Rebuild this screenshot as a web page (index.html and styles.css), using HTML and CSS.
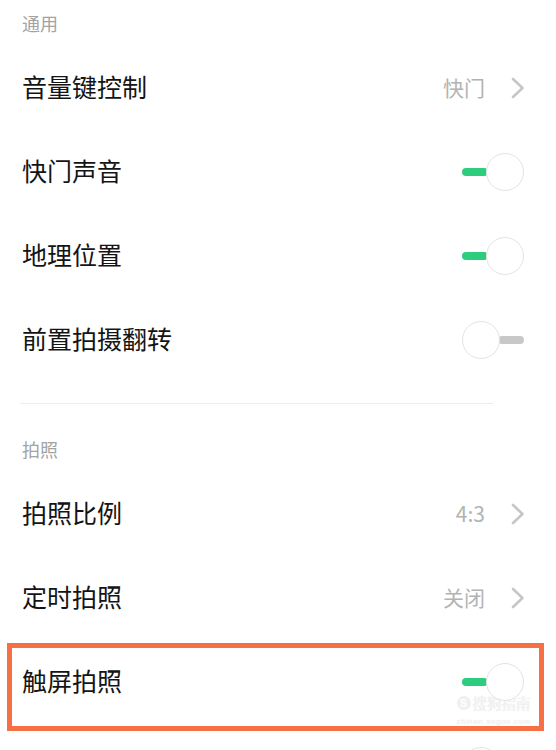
FILE: index.html
```html
<!DOCTYPE html>
<html lang="zh-CN">
<head>
<meta charset="utf-8">
<title>相机设置</title>
<link rel="stylesheet" href="styles.css">
</head>
<body>
<div class="page">
  <div class="section-title">通用</div>
  <div class="row">
    <span class="label">音量键控制</span>
    <span class="right"><span class="value">快门</span><svg class="chev" width="14" height="22" viewBox="0 0 14 22"><polyline points="2,2 11.5,11 2,20" fill="none" stroke="#c6c6c6" stroke-width="2.6" stroke-linecap="round" stroke-linejoin="round"/></svg></span>
  </div>
  <div class="row">
    <span class="label">快门声音</span>
    <span class="toggle on"><span class="bar"></span><span class="knob"></span></span>
  </div>
  <div class="row">
    <span class="label">地理位置</span>
    <span class="toggle on"><span class="bar"></span><span class="knob"></span></span>
  </div>
  <div class="row">
    <span class="label">前置拍摄翻转</span>
    <span class="toggle off"><span class="knob"></span><span class="bar"></span></span>
  </div>
  <div class="divider"></div>
  <div class="section-title">拍照</div>
  <div class="row">
    <span class="label">拍照比例</span>
    <span class="right"><span class="value">4:3</span><svg class="chev" width="14" height="22" viewBox="0 0 14 22"><polyline points="2,2 11.5,11 2,20" fill="none" stroke="#c6c6c6" stroke-width="2.6" stroke-linecap="round" stroke-linejoin="round"/></svg></span>
  </div>
  <div class="row">
    <span class="label">定时拍照</span>
    <span class="right"><span class="value">关闭</span><svg class="chev" width="14" height="22" viewBox="0 0 14 22"><polyline points="2,2 11.5,11 2,20" fill="none" stroke="#c6c6c6" stroke-width="2.6" stroke-linecap="round" stroke-linejoin="round"/></svg></span>
  </div>
  <div class="row">
    <span class="label">触屏拍照</span>
    <span class="toggle on"><span class="bar"></span><span class="knob"></span></span>
  </div>
  <div class="row">
    <span class="label">连拍</span>
    <span class="toggle off"><span class="knob"></span><span class="bar"></span></span>
  </div>
  <div class="highlight"></div>
  <div class="watermark">
    <span class="wm-main"><span class="wm-s">S</span>搜狗指南</span>
    <span class="wm-url">zhinan.sogou.com</span>
  </div>
</div>
</body>
</html>
```

FILE: styles.css
```css
html, body {
  margin: 0;
  padding: 0;
  background: #ffffff;
}
body {
  width: 556px;
  height: 750px;
  overflow: hidden;
  font-family: "Noto Sans CJK SC", "Noto Sans", sans-serif;
}
.page {
  position: relative;
  display: flex;
  flex-direction: column;
}
.section-title {
  height: 46px;
  display: flex;
  align-items: center;
  padding-left: 22px;
  font-size: 18px;
  color: #a3a3a3;
}
.row {
  height: 84px;
  display: flex;
  align-items: center;
  justify-content: space-between;
  padding: 0 32px 0 22px;
  flex-shrink: 0;
}
.label {
  font-size: 25px;
  color: #141414;
  line-height: 1;
  padding-bottom: 4px;
}
.right {
  display: flex;
  align-items: center;
  gap: 26px;
}
.value {
  font-size: 21px;
  color: #b3b3b3;
  line-height: 1;
  padding-bottom: 2px;
}
.chev {
  display: block;
  margin-right: -1px;
}
.toggle {
  width: 62px;
  height: 38px;
  display: flex;
  align-items: center;
}
.toggle .bar {
  width: 26px;
  height: 8px;
  border-radius: 4px;
}
.toggle .knob {
  width: 36px;
  height: 36px;
  border-radius: 50%;
  border: 1px solid #e3e3e3;
  background: #fff;
  position: relative;
  z-index: 1;
}
.toggle.on .bar {
  background: #2ccd7c;
  margin-right: -2px;
}
.toggle.off .bar {
  background: #c8c8c8;
  margin-left: -2px;
}
.divider {
  height: 1px;
  background: #ececec;
  margin: 21px 63px 22px 20px;
}
.highlight {
  position: absolute;
  left: 7px;
  top: 643px;
  width: 527px;
  height: 78px;
  border: 5px solid #f76f45;
  pointer-events: none;
}
.watermark {
  position: absolute;
  left: 455px;
  top: 694px;
  width: 77px;
  display: flex;
  flex-direction: column;
  align-items: center;
  color: #f4f4f4;
  text-shadow: 0 0 1px #dcdcdc;
}
.wm-main {
  display: flex;
  align-items: center;
  gap: 2px;
  font-size: 14.5px;
  line-height: 18px;
}
.wm-s {
  width: 14px;
  height: 14px;
  border-radius: 50%;
  background: #f0f0f0;
  color: #fff;
  font-family: "Liberation Sans", sans-serif;
  font-size: 11px;
  font-weight: bold;
  line-height: 14px;
  text-align: center;
  text-shadow: none;
}
.wm-url {
  font-family: "Liberation Sans", sans-serif;
  font-size: 8px;
  line-height: 9px;
  letter-spacing: 0.6px;
  margin-top: 5px;
}
```
